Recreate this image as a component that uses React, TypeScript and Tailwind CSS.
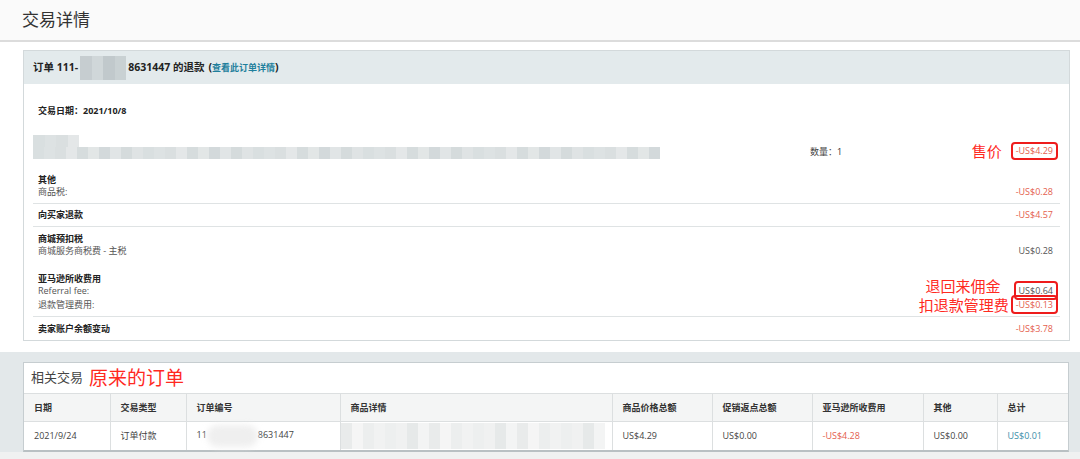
import React from 'react';

const greyShades = ['#c3cbce', '#b9c2c5', '#ccd3d5', '#bfc7ca', '#c8cfd1', '#b6bfc2', '#c6cdd0', '#bcc4c7'];
const lightShades = ['#dde2e3', '#d6dcdd', '#e1e5e6', '#d9dfe0', '#e4e7e8', '#d3d9db', '#dfe3e4', '#dadfe0', '#e2e6e6', '#d5dbdc'];
const paleShades = ['#f1f2f2', '#eceeee', '#f5f5f5', '#e9ebeb', '#f3f4f4', '#e6e9e9', '#f0f1f1', '#edefef'];

const Mosaic: React.FC<{ count: number; cell: number; h: number; palette: string[]; className?: string }> = ({ count, cell, h, palette, className }) => (
    <span className={`inline-flex blur-[0.6px] ${className ?? ''}`}>
        {Array.from({ length: count }).map((_, i) => (
            <span key={i} style={{ width: cell, height: h, background: palette[(i * 7 + 3) % palette.length] }} />
        ))}
    </span>
);

const Line: React.FC<{ label: string; value?: string; bold?: boolean; tone?: 'red' | 'gray'; boxed?: boolean; note?: React.ReactNode }> = ({ label, value, bold, tone = 'red', boxed, note }) => (
    <div className="flex justify-between items-center leading-[12px] h-[12px] pl-[5px] pr-[7px]">
        <span className={bold ? 'font-bold text-[#222]' : 'text-[#555]'}>{label}</span>
        {value && (
            <span className="relative">
                {note}
                <span className={`${tone === 'red' ? 'text-[#e4604e]' : 'text-[#555]'} ${boxed ? 'px-[3px] -mx-[3px] py-[1px] outline-2 outline-[#ee1c1c] rounded-[2px]' : ''}`}>{value}</span>
            </span>
        )}
    </div>
);

const cols = ['日期', '交易类型', '订单编号', '商品详情', '商品价格总额', '促销返点总额', '亚马逊所收费用', '其他', '总计'];

export default function App() {
    return (
        <div className="w-[1080px] h-[459px] overflow-hidden bg-white text-[9px] font-['Open_Sans','Noto_Sans_CJK_SC',sans-serif] text-[#333]">
            {/* Title */}
            <div className="h-[42px] bg-[#fafafa] border-b-2 border-[#dcdcdc] flex items-center pl-[22px]">
                <h1 className="text-[17px] text-[#333] -mt-[1px]">交易详情</h1>
            </div>

            {/* Refund card */}
            <div className="mt-[8px] ml-[23px] mr-[10px] border border-[#d3d9db]">
                <div className="h-[33px] bg-[#e3eaec] flex items-center px-[9px] text-[10.5px] font-bold text-[#222]">
                    <span>订单 111-</span>
                    <Mosaic count={4} cell={11.5} h={24} palette={greyShades} className="mx-[2px] opacity-80" />
                    <span>8631447 的退款</span>
                    <span className="ml-[4px]">(</span>
                    <span className="text-[9px] text-[#1f7f9c] font-bold">查看此订单详情</span>
                    <span>)</span>
                </div>

                <div className="px-[9px] pb-[5px]">
                    <div className="pt-[21px] pl-[5px] leading-[12px] font-bold text-[#222]">交易日期：2021/10/8</div>

                    {/* product */}
                    <div className="mt-[18px] h-[24px] flex">
                        <div className="flex flex-col w-[627px]">
                            <Mosaic count={4} cell={11.5} h={12} palette={lightShades} />
                            <Mosaic count={57} cell={11} h={12} palette={lightShades} />
                        </div>
                        <div className="self-end mb-[1px] ml-[150px] leading-[12px] text-[#444]">数量：<span className="text-[#333]">1</span></div>
                        <div className="flex-1 self-end mb-[1px] flex items-center justify-end pr-[7px] leading-[12px]">
                            <span className="text-[15px] text-[#ff2a1f] mr-[14px] leading-[12px]">售价</span>
                            <span className="px-[3px] -mx-[3px] py-[1px] outline-2 outline-[#ee1c1c] rounded-[2px] text-[#e4604e]">-US$4.29</span>
                        </div>
                    </div>

                    <div className="pt-[14px] pb-[5px] border-b border-[#dfe3e4]">
                        <div className="leading-[13px] pl-[5px] font-bold text-[#222]">其他</div>
                        <Line label="商品税:" value="-US$0.28" />
                    </div>

                    <div className="pt-[5px] pb-[5px] border-b border-[#dfe3e4]">
                        <Line label="向买家退款" value="-US$4.57" bold />
                    </div>

                    <div className="pt-[6px] pb-[5px] border-b border-[#dfe3e4]">
                        <Line label="商城预扣税" bold />
                        <Line label="商城服务商税费 - 主税" value="US$0.28" tone="gray" />
                        <div className="h-[16px]" />
                        <Line label="亚马逊所收费用" bold />
                        <Line
                            label="Referral fee:"
                            value="US$0.64"
                            tone="gray"
                            boxed
                            note={<span className="absolute right-full mr-[18px] -top-[6px] whitespace-nowrap text-[15px] leading-[15px] text-[#ff2a1f]">退回来佣金</span>}
                        />
                        <div className="h-[2px]" />
                        <Line
                            label="退款管理费用:"
                            value="-US$0.13"
                            boxed
                            note={<span className="absolute right-full mr-[7px] -top-[1px] whitespace-nowrap text-[15px] leading-[15px] text-[#ff2a1f]">扣退款管理费</span>}
                        />
                    </div>

                    <div className="pt-[6px]">
                        <Line label="卖家账户余额变动" value="-US$3.78" bold />
                    </div>
                </div>
            </div>

            {/* Related transactions */}
            <div className="mt-[11px] bg-[#e3e8ea] pt-[10px] pl-[23px] pr-[11px] h-[120px]">
                <div className="bg-white border border-[#c6cdd0] border-b-2 border-b-[#b9c0c3]">
                    <div className="h-[30px] flex items-center px-[7px]">
                        <span className="text-[13px] text-[#444]">相关交易</span>
                        <span className="ml-[6px] text-[19px] text-[#ff2a1f] leading-[20px]">原来的订单</span>
                    </div>
                    <table className="w-full table-fixed border-collapse">
                        <colgroup>
                            {[86, 76, 154, 272, 100, 100, 111, 74, 71].map((w, i) => (
                                <col key={i} style={{ width: w }} />
                            ))}
                        </colgroup>
                        <thead>
                            <tr className="h-[28px] bg-[#f4f5f5]">
                                {cols.map((c, i) => (
                                    <th key={c} className={`text-left font-semibold text-[#333] pl-[10px] border-t border-[#dcdfe0] ${i > 0 ? 'border-l' : ''}`}>{c}</th>
                                ))}
                            </tr>
                        </thead>
                        <tbody>
                            <tr className="h-[28px] text-[#444]">
                                <td className="pl-[10px] border-t border-[#dcdfe0]">2021/9/24</td>
                                <td className="pl-[10px] border-t border-l border-[#dcdfe0]">订单付款</td>
                                <td className="pl-[10px] border-t border-l border-[#dcdfe0] whitespace-nowrap">
                                    <span>11</span>
                                    <span className="inline-block align-middle w-[51px] h-[22px] bg-[#efefef] rounded-full blur-[3px]" />
                                    <span>8631447</span>
                                </td>
                                <td className="border-t border-l border-[#dcdfe0] overflow-hidden">
                                    <Mosaic count={24} cell={11} h={26} palette={paleShades} className="align-middle" />
                                </td>
                                <td className="pl-[10px] border-t border-l border-[#dcdfe0]">US$4.29</td>
                                <td className="pl-[10px] border-t border-l border-[#dcdfe0]">US$0.00</td>
                                <td className="pl-[10px] border-t border-l border-[#dcdfe0] text-[#e4604e]">-US$4.28</td>
                                <td className="pl-[10px] border-t border-l border-[#dcdfe0]">US$0.00</td>
                                <td className="pl-[10px] border-t border-l border-[#dcdfe0] text-[#3a8ea8]">US$0.01</td>
                            </tr>
                        </tbody>
                    </table>
                </div>
                <div className="-ml-[23px] -mr-[11px] h-[12px] bg-[#f0f1f1]" />
            </div>
        </div>
    );
}
